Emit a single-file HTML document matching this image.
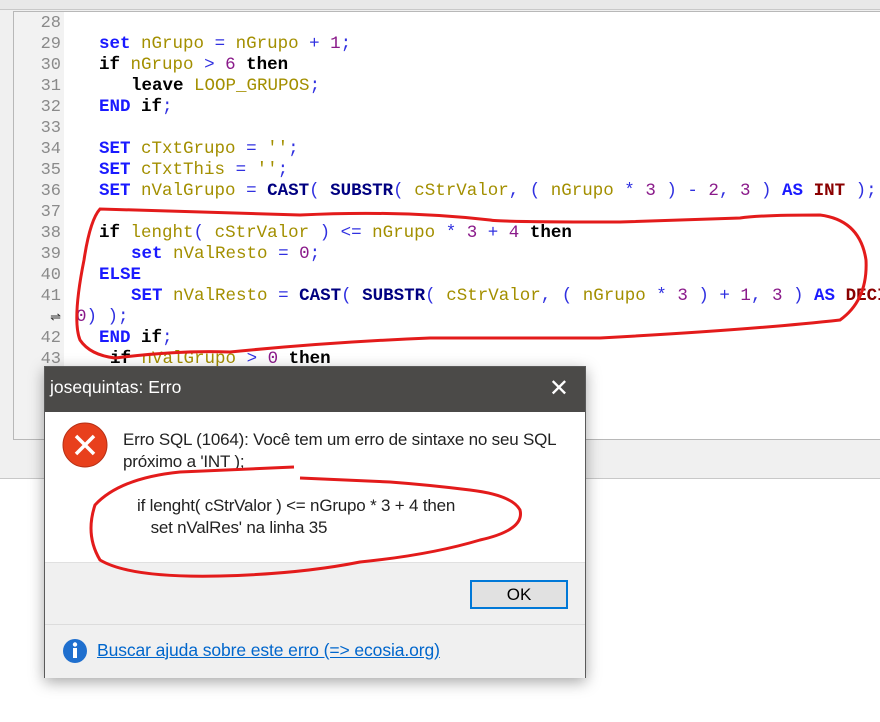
<!DOCTYPE html>
<html><head><meta charset="utf-8"><style>
*{margin:0;padding:0;box-sizing:border-box}
body{width:880px;height:722px;overflow:hidden;background:#f0f0f0;position:relative;font-family:"Liberation Sans",sans-serif}
.tabs{position:absolute;left:0;top:0;width:880px;height:10px;background:#e8e8e8;border-bottom:1px solid #c8c8c8}
.editor{position:absolute;left:13px;top:11px;width:880px;height:429px;background:#fff;border:1px solid #b8b8b8}
.gut{position:absolute;left:14px;top:12px;width:50px;height:427px;background:#f2f2f2}
.lower{position:absolute;left:0;top:478px;width:880px;height:244px;background:#fff;border-top:1px solid #c8c8c8}
.ln{position:absolute;left:14px;width:47px;text-align:right;font:17px "Liberation Mono",monospace;color:#8a8a8a;line-height:21px}
.cl{position:absolute;font:17.5px "Liberation Mono",monospace;line-height:21px;white-space:pre;color:#000}
.k{color:#1a1aff;font-weight:bold}.b{font-weight:bold;color:#000}.v{color:#a38f00}.n{color:#8a1a8a}.o{color:#3030e0}.f{color:#000080;font-weight:bold}.r{color:#8a0000;font-weight:bold}
.dlg{position:absolute;left:44px;top:366px;width:542px;height:312px;background:#fff;border:1px solid #5a5a5a;box-shadow:0 4px 14px rgba(0,0,0,.35)}
.tb{height:45px;background:#4b4a48;color:#fff;font-size:17.5px;padding:10px 0 0 5px}
.x{position:absolute;right:16px;top:7px;color:#fff;font-size:24px}
.msg{position:absolute;left:78px;font-size:17px;color:#222;line-height:22px;white-space:pre;letter-spacing:-0.2px}
.btnarea{position:absolute;left:0;top:195px;width:540px;height:62px;background:#f0f0f0;border-top:1px solid #e0e0e0}
.ok{position:absolute;left:425px;top:17px;width:98px;height:29px;border:2px solid #0078d7;background:#e1e1e1;text-align:center;font-size:17px;line-height:25px}
.foot{position:absolute;left:0;top:257px;width:540px;height:54px;background:#f0f0f0;border-top:1px solid #dcdcdc}
.link{position:absolute;left:52px;top:15px;color:#0066cc;text-decoration:underline;font-size:17.5px;letter-spacing:-0.1px}
</style></head><body>
<div class="tabs"></div>
<div class="editor"></div>
<div class="gut"></div>
<div class="lower"></div>

<div class="ln" style="top:13px">28</div>
<div class="ln" style="top:34px">29</div>
<div class="ln" style="top:55px">30</div>
<div class="ln" style="top:76px">31</div>
<div class="ln" style="top:97px">32</div>
<div class="ln" style="top:118px">33</div>
<div class="ln" style="top:139px">34</div>
<div class="ln" style="top:160px">35</div>
<div class="ln" style="top:181px">36</div>
<div class="ln" style="top:202px">37</div>
<div class="ln" style="top:223px">38</div>
<div class="ln" style="top:244px">39</div>
<div class="ln" style="top:265px">40</div>
<div class="ln" style="top:286px">41</div>
<div class="ln" style="top:307px;color:#333;font-size:13px">⇌</div>
<div class="ln" style="top:328px">42</div>
<div class="ln" style="top:349px">43</div>

<div class="cl" style="left:99px;top:34px"><span class="k">set</span> <span class="v">nGrupo</span> <span class="o">=</span> <span class="v">nGrupo</span> <span class="o">+</span> <span class="n">1</span><span class="o">;</span></div>
<div class="cl" style="left:99px;top:55px"><span class="b">if</span> <span class="v">nGrupo</span> <span class="o">&gt;</span> <span class="n">6</span> <span class="b">then</span></div>
<div class="cl" style="left:131px;top:76px"><span class="b">leave</span> <span class="v">LOOP_GRUPOS</span><span class="o">;</span></div>
<div class="cl" style="left:99px;top:97px"><span class="k">END</span> <span class="b">if</span><span class="o">;</span></div>
<div class="cl" style="left:99px;top:139px"><span class="k">SET</span> <span class="v">cTxtGrupo</span> <span class="o">=</span> <span class="v">''</span><span class="o">;</span></div>
<div class="cl" style="left:99px;top:160px"><span class="k">SET</span> <span class="v">cTxtThis</span> <span class="o">=</span> <span class="v">''</span><span class="o">;</span></div>
<div class="cl" style="left:99px;top:181px"><span class="k">SET</span> <span class="v">nValGrupo</span> <span class="o">=</span> <span class="f">CAST</span><span class="o">(</span> <span class="f">SUBSTR</span><span class="o">(</span> <span class="v">cStrValor</span><span class="o">,</span> <span class="o">(</span> <span class="v">nGrupo</span> <span class="o">*</span> <span class="n">3</span> <span class="o">)</span> <span class="o">-</span> <span class="n">2</span><span class="o">,</span> <span class="n">3</span> <span class="o">)</span> <span class="k">AS</span> <span class="r">INT</span> <span class="o">);</span></div>
<div class="cl" style="left:99px;top:223px"><span class="b">if</span> <span class="v">lenght</span><span class="o">(</span> <span class="v">cStrValor</span> <span class="o">)</span> <span class="o">&lt;=</span> <span class="v">nGrupo</span> <span class="o">*</span> <span class="n">3</span> <span class="o">+</span> <span class="n">4</span> <span class="b">then</span></div>
<div class="cl" style="left:131px;top:244px"><span class="k">set</span> <span class="v">nValResto</span> <span class="o">=</span> <span class="n">0</span><span class="o">;</span></div>
<div class="cl" style="left:99px;top:265px"><span class="k">ELSE</span></div>
<div class="cl" style="left:131px;top:286px"><span class="k">SET</span> <span class="v">nValResto</span> <span class="o">=</span> <span class="f">CAST</span><span class="o">(</span> <span class="f">SUBSTR</span><span class="o">(</span> <span class="v">cStrValor</span><span class="o">,</span> <span class="o">(</span> <span class="v">nGrupo</span> <span class="o">*</span> <span class="n">3</span> <span class="o">)</span> <span class="o">+</span> <span class="n">1</span><span class="o">,</span> <span class="n">3</span> <span class="o">)</span> <span class="k">AS</span> <span class="r">DECI</span></div>
<div class="cl" style="left:76px;top:307px"><span class="n">0</span><span class="o">) );</span></div>
<div class="cl" style="left:99px;top:328px"><span class="k">END</span> <span class="b">if</span><span class="o">;</span></div>
<div class="cl" style="left:110px;top:349px"><span class="b">if</span> <span class="v">nValGrupo</span> <span class="o">&gt;</span> <span class="n">0</span> <span class="b">then</span></div>

<svg style="position:absolute;left:0;top:0" width="880" height="722">
<path d="M100 209 Q90 220 84 260 Q72 320 80 340 Q90 355 115 358 Q180 350 230 352 Q330 342 430 338 L600 338 Q750 330 840 320 Q868 300 866 260 Q860 220 820 215 Q760 215 740 218 L620 222 Q500 222 490 220 Q400 210 300 215 Q200 212 100 209Z" fill="none" stroke="#e31b1b" stroke-width="3"/>
</svg>

<div class="dlg">
 <div class="tb">josequintas: Erro</div>
 <div class="x">✕</div>
 <svg style="position:absolute;left:17px;top:55px" width="46" height="46"><circle cx="23" cy="23" r="22" fill="#e8401c" stroke="#b83015"/><path d="M14 14L32 32M32 14L14 32" stroke="#fff" stroke-width="3.5"/></svg>
 <div class="msg" style="top:62px">Erro SQL (1064): Você tem um erro de sintaxe no seu SQL
próximo a 'INT );</div>
 <div class="msg" style="left:92px;top:128px">if lenght( cStrValor ) &lt;= nGrupo * 3 + 4 then
   set nValRes' na linha 35</div>
 <div class="btnarea"><div class="ok">OK</div></div>
 <div class="foot">
  <svg style="position:absolute;left:17px;top:13px" width="26" height="26"><circle cx="13" cy="13" r="12" fill="#1f6fce"/><rect x="11" y="10" width="4" height="10" fill="#fff"/><circle cx="13" cy="6.5" r="2.2" fill="#fff"/></svg>
  <div class="link">Buscar ajuda sobre este erro (=&gt; ecosia.org)</div>
 </div>
</div>
<svg style="position:absolute;left:0;top:0" width="880" height="722">
<path d="M294 467 Q230 470 180 472 Q120 478 95 505 Q85 535 100 560 Q130 578 220 576 Q300 574 360 562 Q430 555 480 540 Q525 530 520 510 Q512 495 470 490 Q430 485 390 482 L300 478" fill="none" stroke="#e31b1b" stroke-width="3"/>
</svg>
</body></html>
